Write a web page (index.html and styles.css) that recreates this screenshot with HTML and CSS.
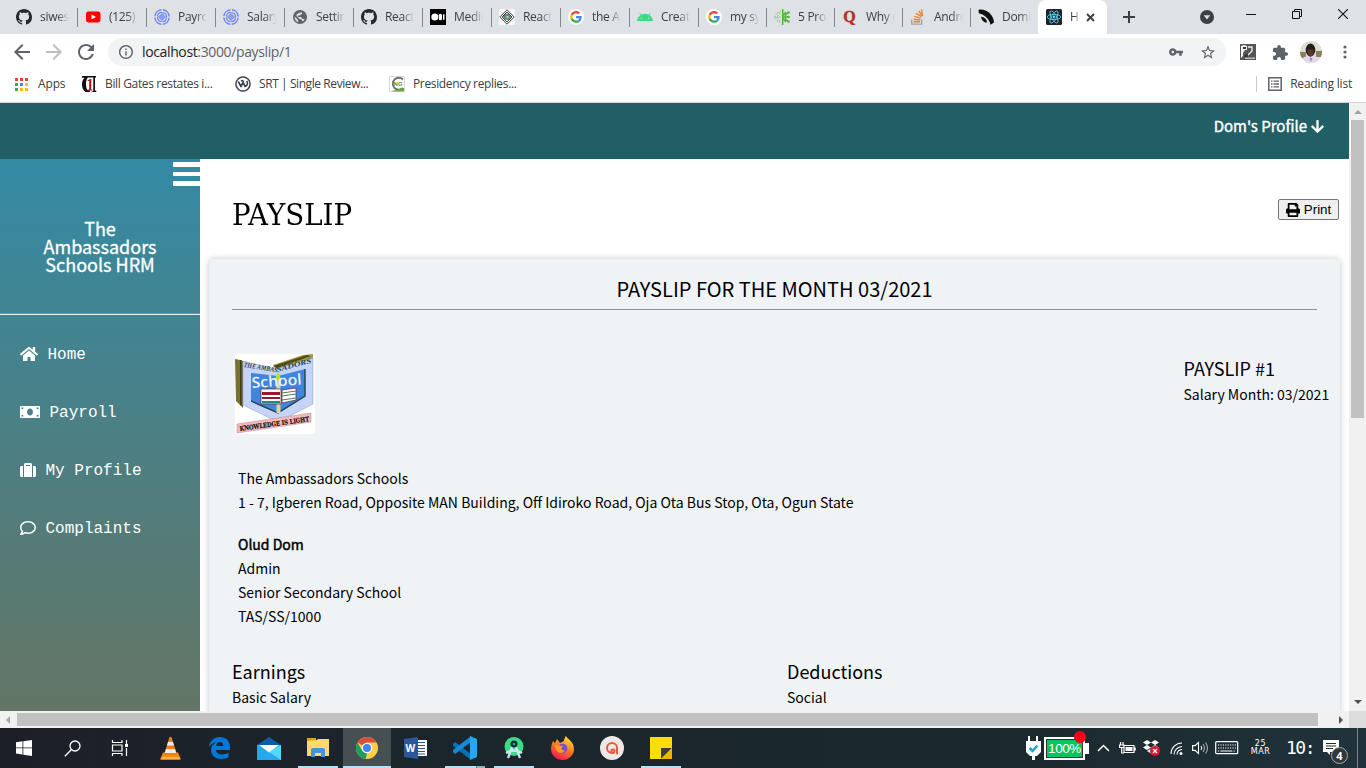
FILE: index.html
```html
<!DOCTYPE html>
<html lang="en">
<head>
<meta charset="utf-8">
<title>HRM - Payslip</title>
<link rel="stylesheet" href="styles.css">
</head>
<body>
<svg class="defs" aria-hidden="true">
  <symbol id="github" viewBox="0 0 16 16"><path fill="#24292e" d="M8 0C3.58 0 0 3.58 0 8c0 3.54 2.29 6.53 5.47 7.59.4.07.55-.17.55-.38 0-.19-.01-.82-.01-1.49-2.01.37-2.53-.49-2.69-.94-.09-.23-.48-.94-.82-1.13-.28-.15-.68-.52-.01-.53.63-.01 1.08.58 1.23.82.72 1.21 1.87.87 2.33.66.07-.52.28-.87.51-1.07-1.78-.2-3.64-.89-3.64-3.95 0-.87.31-1.59.82-2.15-.08-.2-.36-1.02.08-2.12 0 0 .67-.21 2.2.82.64-.18 1.32-.27 2-.27s1.36.09 2 .27c1.53-1.04 2.2-.82 2.2-.82.44 1.1.16 1.92.08 2.12.51.56.82 1.27.82 2.15 0 3.07-1.87 3.75-3.65 3.95.29.25.54.73.54 1.48 0 1.07-.01 1.93-.01 2.2 0 .21.15.46.55.38A8.01 8.01 0 0 0 16 8c0-4.42-3.58-8-8-8z"/></symbol>
  <symbol id="rings" viewBox="0 0 16 16"><g fill="none" stroke="#6f86ee"><circle cx="8" cy="8" r="7.2" stroke-width="1.5" stroke-dasharray="9.8 1.5" stroke-dashoffset="-.8"/><circle cx="8" cy="8" r="4.6" stroke-width="1.3" stroke-dasharray="6 1.2" stroke-dashoffset="-.6"/><circle cx="8" cy="8" r="2.2" stroke-width="1.1"/><path d="M8 3v10M3 8h10" stroke-width=".9"/></g></symbol>
  <symbol id="google" viewBox="0 0 16 16"><circle cx="8" cy="8" r="8" fill="#fff"/><g transform="translate(2.1 2) scale(.247)"><path fill="#EA4335" d="M24 9.5c3.54 0 6.71 1.22 9.21 3.6l6.85-6.85C35.9 2.38 30.47 0 24 0 14.62 0 6.51 5.38 2.56 13.22l7.98 6.19C12.43 13.72 17.74 9.5 24 9.5z"/><path fill="#4285F4" d="M46.98 24.55c0-1.57-.15-3.09-.38-4.55H24v9.02h12.94c-.58 2.96-2.26 5.48-4.78 7.18l7.73 6c4.51-4.18 7.09-10.36 7.09-17.65z"/><path fill="#FBBC05" d="M10.53 28.59c-.48-1.45-.76-2.99-.76-4.59s.27-3.14.76-4.59l-7.98-6.19C.92 16.46 0 20.12 0 24c0 3.88.92 7.54 2.56 10.78l7.97-6.19z"/><path fill="#34A853" d="M24 48c6.48 0 11.93-2.13 15.89-5.81l-7.73-6c-2.15 1.45-4.92 2.3-8.16 2.3-6.26 0-11.57-4.22-13.47-9.91l-7.98 6.19C6.51 42.62 14.62 48 24 48z"/></g></symbol>
</svg>

<div class="browser">
  <div class="tabstrip">
    <div class="tab"><svg class="fav"><use href="#github"/></svg><span class="tab-title">siwes/</span></div>
    <div class="tab"><svg class="fav" viewBox="0 0 16 16"><rect x="1" y="2.5" width="14.5" height="11" rx="2.4" fill="#f00"/><path fill="#fff" d="M6.5 5.5v5L11 8z"/></svg><span class="tab-title">(125) Y</span></div>
    <div class="tab"><svg class="fav"><use href="#rings"/></svg><span class="tab-title">Payroll</span></div>
    <div class="tab"><svg class="fav"><use href="#rings"/></svg><span class="tab-title">Salary</span></div>
    <div class="tab"><svg class="fav" viewBox="0 0 16 16"><circle cx="8" cy="8" r="7" fill="#5f6368"/><path fill="#dee1e6" d="M2.5 7.5l3.2 3 .8 2.8C3.6 12.5 2.5 10 2.5 7.5zM6 8h3l1.5 2h2c-.5 1.5-1 2-1.800 2.500L9.500 10.500 6.500 9.600zM7.500 3.800l2.500-.6v1.600L8 6.300 5.800 6.800 5.600 8.300 4.200 6.800 5 5.300z"/></svg><span class="tab-title">Settings</span></div>
    <div class="tab"><svg class="fav"><use href="#github"/></svg><span class="tab-title">React-</span></div>
    <div class="tab"><svg class="fav" viewBox="0 0 16 16"><path d="M0 0h16v16H0z"/><circle cx="4.800" cy="8" r="3.500" fill="#fff"/><rect x="8.800" y="4.800" width="3.200" height="6.400" rx="1.500" fill="#fff"/><path fill="#fff" d="M13 5.200h1.500v5.600H13z"/></svg><span class="tab-title">Medium</span></div>
    <div class="tab"><svg class="fav" viewBox="0 0 16 16"><path fill="#f7f7f7" d="M0 0h16v16H0z"/><path fill="none" stroke="#444" stroke-width="1" d="M8 .8L15.200 8 8 15.200.8 8zM8 3L13 8 8 13 3 8z"/><path fill="#5a9577" stroke="#333" stroke-width=".5" d="M5 6l2-1 4 .5 1 2-2.500 3-3.500-.5-1.500-2z"/><circle cx="8.500" cy="8" r="1" fill="#ddd"/></svg><span class="tab-title">React t</span></div>
    <div class="tab"><svg class="fav"><use href="#google"/></svg><span class="tab-title">the Am</span></div>
    <div class="tab"><svg class="fav" viewBox="0 0 16 16"><path fill="#3ddc84" d="M0 12a8 8 0 0 1 3.600-6L2.300 3.800l.6-.3L4.200 5.700a8.500 8.500 0 0 1 7.600 0l1.300-2.200.6.3L12.400 6A8 8 0 0 1 16 12z"/><path fill="#dee1e6" d="M3.800 8.700h1.200v1.100H3.800zM11 8.700h1.200v1.100H11z"/></svg><span class="tab-title">Create</span></div>
    <div class="tab tight"><svg class="fav"><use href="#google"/></svg><span class="tab-title">my sys</span></div>
    <div class="tab tight"><svg class="fav" viewBox="0 0 16 16"><g fill="none" stroke="#58b43c"><path stroke-width="1.500" d="M8.700 0v16M9 6.500l3-3.500M9 9.500l3 3.500M9 8h5M12 5.500l2.500-2M12 10.500l2.500 2M11.500 3v10"/><path stroke-width="1.300" stroke-dasharray="1.300 1.300" opacity=".5" d="M7 2L2.500 4.500 1 8l1.500 3.500L7 14M6 4L4 6v4l2 2M0 8h7"/></g><g fill="#58b43c"><circle cx="14.500" cy="3.500" r="1.300"/><circle cx="14.500" cy="8" r="1.300"/><circle cx="14.500" cy="12.500" r="1.300"/></g></svg><span class="tab-title">5 Prob</span></div>
    <div class="tab tight"><svg class="fav" viewBox="0 0 16 16"><text x="1.200" y="13.200" class="quora">Q</text></svg><span class="tab-title">Why d</span></div>
    <div class="tab tight"><svg class="fav" viewBox="0 0 16 16"><path fill="none" stroke="#9fa4a8" stroke-width="1.300" d="M1.700 10.500v4.700h10v-4.700"/><path fill="none" stroke="#f48024" stroke-width="1.400" d="M3.500 12.800h6.700M3.600 10.300l6.600.7M4.300 7.300l6.300 1.900M6 4.300l5.600 3.400M8.800 2l3.800 5.200M11.500.5l1 6"/></svg><span class="tab-title">Andro</span></div>
    <div class="tab tight"><svg class="fav" viewBox="0 0 16 16"><path fill="#111" d="M.5.8C4-.3 8 .8 11.500 4c3 3 4.500 6.500 4.500 9.500l-3.500 2.200C11.500 10.500 7.500 6 .8 4.200zM3 7.800c3 .3 6 2.500 6 5.800-3 0-5.500-2.300-6-5.800z"/></svg><span class="tab-title">Domin</span></div>
    <div class="tab tab-active"><svg class="fav" viewBox="0 0 16 16"><rect width="16" height="16" rx="1.500" fill="#20232a"/><g fill="none" stroke="#61dafb" stroke-width=".8"><ellipse cx="8" cy="8" rx="6.800" ry="2.600"/><ellipse cx="8" cy="8" rx="6.800" ry="2.600" transform="rotate(60 8 8)"/><ellipse cx="8" cy="8" rx="6.800" ry="2.600" transform="rotate(120 8 8)"/></g><circle cx="8" cy="8" r="1.400" fill="#61dafb"/></svg><span class="tab-title">HRM</span><svg class="close" viewBox="0 0 9 9"><path d="M1 1l7 7M8 1L1 8" stroke="#3c4043" stroke-width="2"/></svg></div>
    <svg class="new-tab" viewBox="0 0 12 12"><path d="M6 0v12M0 6h12" stroke="#3c4043" stroke-width="2"/></svg>
    <div class="window-controls">
      <svg width="14" height="14" viewBox="0 0 14 14"><circle cx="7" cy="7" r="7" fill="#3c4043"/><path fill="#dee1e6" d="M3.700 5.200h6.600L7 9.600z"/></svg>
      <svg class="raised min" width="10" height="10" viewBox="0 0 10 10"><path d="M0 5.500h10" stroke="#111"/></svg>
      <svg class="raised max" width="10" height="10" viewBox="0 0 10 10"><path fill="none" stroke="#111" d="M.5 2.500h7v7h-7zM2.500 2.500v-2h7v7h-2"/></svg>
      <svg class="raised shut" width="10" height="10" viewBox="0 0 10 10"><path d="M0 0l10 10M10 0L0 10" stroke="#111" stroke-width="1.100"/></svg>
    </div>
  </div>

  <div class="toolbar">
    <svg class="nav" viewBox="3 3 18 18"><path fill="#5f6368" d="M20 11H7.830l5.590-5.590L12 4l-8 8 8 8 1.410-1.410L7.830 13H20v-2z"/></svg>
    <svg class="nav" viewBox="3 3 18 18"><path fill="#bcbec1" d="M4 11h12.170l-5.590-5.590L12 4l8 8-8 8-1.410-1.410L16.170 13H4v-2z"/></svg>
    <svg class="nav" viewBox="3 3 18 18"><path fill="#5f6368" d="M17.650 6.350C16.200 4.900 14.210 4 12 4c-4.420 0-7.990 3.580-7.990 8s3.570 8 7.990 8c3.730 0 6.840-2.550 7.730-6h-2.080c-.82 2.330-3.040 4-5.650 4-3.310 0-6-2.690-6-6s2.690-6 6-6c1.660 0 3.140.69 4.220 1.780L13 11h7V4l-2.350 2.350z"/></svg>
    <div class="omnibox">
      <svg class="info" viewBox="2 2 20 20"><path fill="#5f6368" d="M11 17h2v-6h-2v6zm1-15C6.480 2 2 6.480 2 12s4.480 10 10 10 10-4.480 10-10S17.520 2 12 2zm0 18c-4.410 0-8-3.590-8-8s3.590-8 8-8 8 3.590 8 8-3.590 8-8 8zM11 9h2V7h-2v2z"/></svg>
      <span class="url"><b>localhost</b>:3000/payslip/1</span>
      <svg class="key" viewBox="1 6 22 12"><path fill="#5f6368" d="M12.650 10C11.830 7.670 9.610 6 7 6c-3.310 0-6 2.690-6 6s2.690 6 6 6c2.610 0 4.830-1.670 5.650-4H17v4h4v-4h2v-4H12.650zM7 14c-1.100 0-2-.9-2-2s.9-2 2-2 2 .9 2 2-.9 2-2 2z"/></svg>
      <svg class="star" viewBox="2 2 20 19"><path fill="#5f6368" d="M22 9.240l-7.190-.62L12 2 9.190 8.630 2 9.240l5.460 4.730L5.820 21 12 17.270 18.180 21l-1.630-7.030L22 9.240zM12 15.400l-3.760 2.270 1-4.280-3.320-2.880 4.380-.38L12 6.100l1.710 4.040 4.380.38-3.320 2.880 1 4.280L12 15.400z"/></svg>
    </div>
    <svg class="ext1" viewBox="0 0 16 16"><path fill="#555" d="M0 0h16v16H0z"/><path fill="#f2f2f2" d="M1 2l3-1 3 1v4H5l-2 3v3l-2 2z"/><path fill="#333" d="M3 3h3v2H3zM5 11l3-2v4H4z"/><path fill="none" stroke="#eee" stroke-width="1.300" d="M8 3h4v4l-4 4"/><path fill="#bbb" d="M5 13.500h10V15H5z"/></svg>
    <svg class="ext2" viewBox="2 1 21 21"><path fill="#5f6368" d="M20.500 11H19V7c0-1.100-.9-2-2-2h-4V3.500C13 2.120 11.880 1 10.500 1S8 2.120 8 3.500V5H4c-1.100 0-1.990.9-1.990 2v3.800H3.500c1.490 0 2.700 1.210 2.700 2.700s-1.210 2.700-2.700 2.700H2V20c0 1.100.9 2 2 2h3.800v-1.500c0-1.490 1.210-2.700 2.700-2.700 1.490 0 2.700 1.210 2.700 2.700V22H17c1.100 0 2-.9 2-2v-4h1.500c1.380 0 2.500-1.120 2.500-2.500S21.880 11 20.500 11z"/></svg>
    <svg class="avatar" viewBox="0 0 22 22"><defs><clipPath id="face"><circle cx="11" cy="11" r="11"/></clipPath></defs><g clip-path="url(#face)"><path fill="#d9ddd2" d="M0 0h22v22H0z"/><path fill="#8a8158" d="M0 11h6v6H0zM16 10h6v6h-6z"/><path fill="#ded9ee" d="M0 22c0-5 4-7 10.500-7S22 17 22 22z"/><ellipse cx="10.500" cy="9" rx="4.800" ry="6.500" fill="#231a18"/><path fill="#5b382c" d="M7.500 8.500h6v5l-3 2.500-3-2.500z"/><path fill="#a886a8" d="M9.500 17h3l-1.500 4z"/></g></svg>
    <svg class="dots" viewBox="0 0 4 14"><g fill="#5f6368"><circle cx="2" cy="2" r="1.600"/><circle cx="2" cy="7" r="1.600"/><circle cx="2" cy="12" r="1.600"/></g></svg>
  </div>

  <div class="bookmarks">
    <svg class="bm apps" viewBox="0 0 13 13"><path fill="#ea4335" d="M0 0h3v3H0zM5 0h3v3H5zM10 0h3v3h-3z"/><path fill="#34a853" d="M0 5h3v3H0zM0 10h3v3H0z"/><path fill="#4285f4" d="M5 5h3v3H5z"/><path fill="#fbbc04" d="M10 5h3v3h-3zM5 10h3v3H5zM10 10h3v3h-3z"/></svg>
    <span class="bm-t t-apps">Apps</span>
    <svg class="bm i16" viewBox="0 0 16 16"><path fill="#111" d="M1 0h14v1.500H7C4.500 3 4.500 12 6.500 14l2.500.5V16H4.500C0 13 0 5 3.500 1.800H1z"/><path fill="#111" d="M12.300 1h1.700v13l1.800 2h-6l2.500-1z"/><path fill="#b11" d="M6.500 4.500l2.500-1.500h1.300v10.500h1v1H6.800v-1h1.400V5H6.500z"/></svg>
    <span class="bm-t t-bill">Bill Gates restates i...</span>
    <svg class="bm i16" viewBox="0 0 16 16"><circle cx="8" cy="8" r="7.100" fill="none" stroke="#3d4450" stroke-width="1.500"/><path fill="none" stroke="#3d4450" stroke-width="1.700" stroke-linejoin="round" d="M3.200 5.500l2.800 5 2-4 2.200 4c2.500-1 2.800-3.500 1.600-5.500M6 5q2-1 2.500 1"/></svg>
    <span class="bm-t t-srt">SRT | Single Review...</span>
    <svg class="bm i16" viewBox="0 0 16 16"><path fill="#fff" stroke="#d8d8d8" d="M.5.5h15v15H.5z"/><path fill="none" stroke="#6e746b" stroke-width="1.800" d="M14 3.500A6 6 0 1 0 14 12"/><path fill="#64aa3a" d="M3 15l12-3v3.500H3z"/><text x="4.600" y="10.200" class="ng">NG</text></svg>
    <span class="bm-t t-pres">Presidency replies...</span>
    <div class="reading"><svg width="14" height="14" viewBox="0 0 14 14"><path fill="none" stroke="#5f6368" stroke-width="1.500" d="M.8.8h12.400v12.400H.8z"/><path stroke="#5f6368" stroke-width="1.300" d="M3 4.200h1.500M5.500 4.200H11M3 7h1.500M5.500 7H11M3 9.800h1.500M5.500 9.800H11"/></svg><span class="bm-t t-read">Reading list</span></div>
  </div>

  <div class="viewport">
    <div class="page">
      <header class="topbar"><span class="profile">Dom's Profile</span><svg class="down" viewBox="0 0 448 512"><path fill="#fff" d="M413.100 222.500l22.200 22.200c9.400 9.400 9.400 24.600 0 33.900L241 473c-9.400 9.400-24.600 9.400-33.900 0L12.700 278.600c-9.400-9.400-9.400-24.600 0-33.900l22.200-22.200c9.500-9.500 25-9.300 34.300.4L184 343.400V56c0-13.300 10.700-24 24-24h32c13.300 0 24 10.700 24 24v287.400l114.800-120.500c9.300-9.800 24.800-10 34.300-.4z"/></svg></header>
      <div class="columns">
        <aside class="sidebar">
          <div class="burger"><i></i><i></i><i></i></div>
          <div class="brand">The<br>Ambassadors<br>Schools HRM</div>
          <nav class="menu">
            <a class="item"><svg width="18" height="16" viewBox="0 0 576 512"><path d="M280.370 148.260L96 300.110V464a16 16 0 0 0 16 16l112.060-.29a16 16 0 0 0 15.920-16V368a16 16 0 0 1 16-16h64a16 16 0 0 1 16 16v95.640a16 16 0 0 0 16 16.050L464 480a16 16 0 0 0 16-16V300L295.670 148.260a12.190 12.190 0 0 0-15.300 0zM571.600 251.470L488 182.560V44.050a12 12 0 0 0-12-12h-56a12 12 0 0 0-12 12v72.610L318.470 43a48 48 0 0 0-61 0L4.340 251.470a12 12 0 0 0-1.600 16.900l25.500 31A12 12 0 0 0 45.150 301l235.220-193.740a12.190 12.190 0 0 1 15.300 0L530.900 301a12 12 0 0 0 16.900-1.600l25.500-31a12 12 0 0 0-1.700-16.930z"/></svg>Home</a>
            <a class="item"><svg width="20" height="16" viewBox="0 0 640 512"><path d="M608 64H32C14.330 64 0 78.330 0 96v320c0 17.670 14.330 32 32 32h576c17.670 0 32-14.330 32-32V96c0-17.670-14.330-32-32-32zM48 400v-64c35.350 0 64 28.650 64 64H48zm0-224v-64h64c0 35.350-28.650 64-64 64zm272 192c-53.020 0-96-50.150-96-112 0-61.860 42.980-112 96-112s96 50.140 96 112c0 61.870-43 112-96 112zm272 32h-64c0-35.350 28.650-64 64-64v64zm0-224c-35.350 0-64-28.650-64-64h64v64z"/></svg>Payroll</a>
            <a class="item"><svg width="16" height="16" viewBox="0 0 512 512"><path d="M128 480h256V80c0-26.500-21.500-48-48-48H176c-26.500 0-48 21.500-48 48v400zm64-384h128v32H192V96zm320 80v256c0 26.500-21.500 48-48 48h-48V128h48c26.500 0 48 21.500 48 48zM96 480H48c-26.500 0-48-21.500-48-48V176c0-26.500 21.500-48 48-48h48v352z"/></svg>My Profile</a>
            <a class="item"><svg width="16" height="16" viewBox="0 0 512 512"><path d="M256 32C114.600 32 0 125.100 0 240c0 47.600 19.900 91.200 52.900 126.300C38 405.700 7 439.100 6.500 439.500c-6.600 7-8.400 17.200-4.600 26S14.400 480 24 480c61.500 0 110-25.700 139.100-46.300C192 442.800 223.200 448 256 448c141.400 0 256-93.100 256-208S397.400 32 256 32zm0 368c-26.700 0-53.100-4.100-78.400-12.100l-22.700-7.200-19.500 13.800c-14.300 10.100-33.900 21.400-57.500 29 7.300-12.100 14.400-25.700 19.900-40.200l10.600-28.100-20.600-21.800C69.700 314.100 48 282.200 48 240c0-88.200 93.300-160 208-160s208 71.800 208 160-93.300 160-208 160z"/></svg>Complaints</a>
          </nav>
        </aside>
        <main class="main">
          <div class="heading"><h1>PAYSLIP</h1><button class="print"><svg width="14" height="14" viewBox="0 0 512 512"><path d="M448 192V77.250c0-8.490-3.370-16.620-9.370-22.630L393.370 9.370c-6-6-14.140-9.370-22.630-9.370H96C78.330 0 64 14.330 64 32v160c-35.350 0-64 28.650-64 64v112c0 8.840 7.160 16 16 16h48v96c0 17.670 14.330 32 32 32h320c17.670 0 32-14.330 32-32v-96h48c8.840 0 16-7.160 16-16V256c0-35.350-28.650-64-64-64zm-64 256H128v-96h256v96zm0-224H128V64h192v48c0 8.840 7.160 16 16 16h48v96z"/></svg>Print</button></div>
          <section class="card">
            <h2>PAYSLIP FOR THE MONTH 03/2021</h2>
            <div class="slip-head">
              <svg class="logo" viewBox="0 0 80 80"><path fill="#fff" d="M0 0h80v80H0z"/><path fill="#77702f" d="M0 5l5 1v45l-4-4zM5 6l3 1v47l-3-3z"/><path fill="#3c3c1c" d="M5 6h1.500v46L5 51z"/><path fill="#a69a3c" d="M38 11L68 1l10-1v7L42 17z"/><path fill="#4d4a20" d="M38 12l34-11 4 1-34 12z"/><path fill="#c7d4fa" stroke="#8795ba" stroke-width=".5" d="M8 7l33 8L78 4v46L43 68 8 51z"/><path fill="#3f86dc" d="M16 19l27 3 27-7v26L43 59 16 47z"/><path fill="none" stroke="#244a55" stroke-width="1.500" d="M70 15v27L43 59 16 47"/><path fill="#ddd59a" d="M41.500 27h4v32h-4z"/><path fill="#b8de3c" d="M43 17l3 8-3 4-3-4z"/><path fill="#fff" stroke="#6d2035" stroke-width=".7" d="M26 35h20v15H26zM47 36l14-2v12l-14 3z"/><path fill="#9b1730" d="M27 38h18v3H27zM27 43h18v2H27z"/><path fill="#248887" d="M27 47h18v2.500H27z"/><path stroke="#517d52" stroke-width="1" d="M47 39l14-2M47 42l14-2M47 46l14-2"/><text class="school" x="17" y="34" transform="rotate(-4 17 34)" textLength="50" lengthAdjust="spacingAndGlyphs">School</text><text class="arch" x="8.500" y="13" transform="rotate(9 8.500 13)" textLength="34" lengthAdjust="spacingAndGlyphs">THE AMBAS</text><text class="arch" x="42" y="18" transform="rotate(-15 42 18)" textLength="36" lengthAdjust="spacingAndGlyphs">SADORS</text><path fill="#f0b8b9" stroke="#ba8b8f" stroke-width=".5" d="M2 70l74-11v9L2 79z"/><text class="motto" x="5" y="77" transform="rotate(-8 5 77)" textLength="70" lengthAdjust="spacingAndGlyphs">KNOWLEDGE IS LIGHT</text></svg>
              <div class="slip-no"><h3>PAYSLIP #1</h3><p>Salary Month: 03/2021</p></div>
            </div>
            <div class="org"><p>The Ambassadors Schools</p><p>1 - 7, Igberen Road, Opposite MAN Building, Off Idiroko Road, Oja Ota Bus Stop, Ota, Ogun State</p></div>
            <div class="person"><p class="name">Olud Dom</p><p>Admin</p><p>Senior Secondary School</p><p>TAS/SS/1000</p></div>
            <div class="split"><div><h3>Earnings</h3><p>Basic Salary</p></div><div><h3>Deductions</h3><p>Social</p></div></div>
          </section>
        </main>
      </div>
    </div>
    <div class="vbar"><i class="arrow up"></i><div class="vthumb"></div><i class="arrow dn"></i></div>
    <div class="hbar"><i class="arrow lf"></i><div class="hthumb"></div><i class="arrow rt"></i></div>
    <div class="corner"></div>
  </div>
</div>

<div class="taskbar">
  <div class="cell"><svg width="16" height="16" viewBox="0 0 16 16"><path fill="#fff" d="M0 2.300L6.500 1.300v6.200H0zM7.300 1.200L16 0v7.500H7.300zM0 8.300h6.500v6.200L0 13.600zM7.300 8.300H16V16l-8.700-1.300z"/></svg></div>
  <div class="cell"><svg width="17" height="17" viewBox="0 0 17 17"><g fill="none" stroke="#fff" stroke-width="1.300"><circle cx="11" cy="6" r="5"/><path d="M7.500 9.500L.8 16.200"/></g></svg></div>
  <div class="cell"><svg width="18" height="16" viewBox="0 0 18 16"><g fill="none" stroke="#fff" stroke-width="1.200"><path d="M1.500 0v2.500h9.500V0M1.500 16v-2.500h9.500V16M1.500 5h9.500v6H1.500zM15.500 0v4M15.500 8v8"/></g><path fill="#fff" d="M14 4h3v3h-3z"/></svg></div>
  <div class="apps-group">
    <div class="cell"><svg width="21" height="23" viewBox="0 0 21 23"><path fill="#f58a0b" d="M3 15.500h15l3 7H0z"/><path fill="#f47c0a" d="M9.500 0h2L17 18H4z"/><path fill="#eee" d="M8 5h5l1 3.500H7zM6 12h9l1.200 4H4.800z"/><path fill="#ffb34c" d="M2 20h17l1 2.500H1z"/></svg></div>
    <div class="cell"><svg width="21" height="22" viewBox="0 0 21 22"><path fill="#0078d7" d="M0 10C1 3 6 0 11 0c6 0 10 4 10 10v3H7c.3 3 3 4.500 6 4.500 2.500 0 4.500-.5 6.500-1.700v4.500C17.500 21.500 15 22 12 22 6 22 2 18 2 13c0-3.500 2.200-6.500 5.500-8C4 5.500 1.500 7.500 0 10zM7.200 9h7c0-2.500-1.300-4-3.500-4S7.500 6.500 7.200 9z"/></svg></div>
    <div class="cell"><svg width="24" height="23" viewBox="0 0 24 23"><path fill="#0d5ca8" d="M0 8L12 0l12 8v6H0z"/><path fill="#28a8ea" d="M0 8h24v15H0z"/><path fill="#50d9f8" d="M24 8v15L12 15z"/><path fill="#f6f8fa" d="M2 8h20l-10 7.500z"/></svg></div>
    <div class="cell open"><svg width="22" height="20" viewBox="0 0 22 20"><path fill="#e0a11d" d="M0 0h9v4H0z"/><path fill="#ffd86e" d="M0 3L10 2l1-1h11v17H0z"/><path fill="#3f96d8" d="M4 11l2-1h10l2 1v8h-4v-4H8v4H4z"/></svg></div>
    <div class="cell open current"><svg width="22" height="22" viewBox="0 0 22 22"><circle cx="11" cy="11" r="11" fill="#ffce44"/><path fill="#dd4b3e" d="M1.470 5.500A11 11 0 0 1 20.530 5.500H11L6 8z"/><path fill="#1a9f5e" d="M1.470 5.500l4.800 8.300L11 16.500 9.500 21.900A11 11 0 0 1 1.470 5.500z"/><circle cx="11" cy="11" r="5.200" fill="#fff"/><circle cx="11" cy="11" r="4.100" fill="#4285f4"/></svg></div>
    <div class="cell"><svg width="23" height="22" viewBox="0 0 23 22"><path fill="#fff" d="M11 3h12v16H11z"/><path stroke="#2b579a" stroke-width="1" d="M13 5.500h8M13 8.500h8M13 11.500h8M13 14.500h8M13 17h8"/><path fill="#2b579a" d="M0 2l14-2v22L0 20z"/><text x="1.500" y="15" class="word">W</text></svg></div>
    <div class="cell open vs"><svg width="24" height="24" viewBox="0 0 24 24"><path fill="#0871b8" d="M0 8l2-2 16 12v6L0 10z"/><path fill="#168ad2" d="M0 16l2 2L18 6V0L0 14z"/><path fill="#2aa5f4" d="M17 0l7 3v18l-7 3z"/></svg></div>
    <div class="cell open"><svg width="20" height="22" viewBox="0 0 20 22"><circle cx="10" cy="9.500" r="9.500" fill="#3ddc84"/><path fill="none" stroke="#cde5f2" stroke-width="2.300" d="M8.500 9L4 21M11.500 9L16 21M2 16q8-5 16 0"/><circle cx="10" cy="7" r="3.500" fill="#073042"/><circle cx="10" cy="7" r="1.100" fill="#3ddc84"/></svg></div>
    <div class="cell"><svg width="23" height="24" viewBox="0 0 23 24"><defs><linearGradient id="ff" x1=".8" y1="0" x2=".3" y2="1"><stop stop-color="#ffe53b"/><stop offset=".5" stop-color="#ff7a1e"/><stop offset="1" stop-color="#f0145a"/></linearGradient></defs><path fill="url(#ff)" d="M2 5l2 2 2-4 3 4 4-2c0-2 1-4 2-5 1 3 8 5 8 13 0 6-5 11-11.500 11S0 19 0 13c0-3 1-5 2-8z"/><circle cx="11.500" cy="12.500" r="4.800" fill="#7551d5"/><path fill="#ff9a24" d="M4 9l8 1-2 3 4 2-3 2c-4 0-7-3-7-8z"/></svg></div>
    <div class="cell"><svg width="24" height="24" viewBox="0 0 24 24"><circle cx="12" cy="12" r="12" fill="#eee8e6"/><path fill="none" stroke="#e5583f" stroke-width="2" stroke-linecap="round" d="M17 17.500V12a5 5 0 1 0-5 5c3 0 3.500-3.500 1-3.500-1.500 0-2 1-1.500 2"/></svg></div>
    <div class="cell open"><svg width="22" height="22" viewBox="0 0 22 22"><path fill="#ffdd00" d="M0 0h22v22H0z"/><path fill="#3c3c3c" d="M11 11h11L11 22z"/><path fill="#f1b500" d="M22 11v11H11z"/></svg></div>
  </div>
  <div class="tray">
    <svg width="18" height="40" viewBox="0 0 18 40"><path fill="#fff" d="M3 8h2v5h6V8h2v5h3v11l-4 4h-2v4H7v-4H5l-4-4V13h2z"/><path fill="none" stroke="#1ba3d6" stroke-width="2.500" d="M4.500 20l3 3 5-5.500"/></svg>
    <div class="battery">100%<i class="dot"></i></div>
    <svg class="chev" width="13" height="8" viewBox="0 0 13 8"><path fill="none" stroke="#fff" stroke-width="1.500" d="M1 7l5.500-5.500L12 7"/></svg>
    <svg class="plug" width="17" height="12" viewBox="0 0 17 12"><path fill="none" stroke="#fff" stroke-width="1.200" d="M5 3.500h10v7H5zM16.200 5.500v3M1.500 0v3M4 0v3M.5 3h4.500v2.500H.5zM2.700 5v6H5"/><path fill="#fff" d="M6.500 5h7v4h-7z"/></svg>
    <svg class="drop" width="18" height="16" viewBox="0 0 18 16"><path fill="#fff" d="M0 2.500L4 0l4 2.500L4 5zM8 2.500L12 0l4 2.500L12 5zM0 7.500L4 5l4 2.500L4 10zM8 7.500L12 5l4 2.500L12 10zM4 11l4-2.500 4 2.500-4 2.500z"/><circle cx="12" cy="11" r="5" fill="#d9162b"/><path stroke="#fff" stroke-width="1.300" d="M10 9l4 4M14 9l-4 4"/></svg>
    <svg class="wifi" width="13" height="13" viewBox="0 0 13 13"><g fill="none" stroke="#fff" stroke-width="1.100"><path d="M1 12A11 11 0 0 1 12 1M4 12.500a8.500 8.500 0 0 1 8-8M7 12.500a5.500 5.500 0 0 1 5-5"/></g><circle cx="11" cy="11.500" r="1.500" fill="#fff"/></svg>
    <svg class="vol" width="17" height="14" viewBox="0 0 17 14"><g fill="none" stroke="#fff" stroke-width="1.100"><path d="M.6 4.600H3L6.500 1.500v11L3 9.400H.6zM9 5q1.500 2 0 4"/><path opacity=".6" d="M11 3q3 4 0 8M13.500 1.500q4 5.500 0 11"/></g></svg>
    <svg class="kbd" width="24" height="14" viewBox="0 0 24 14"><rect x=".7" y=".7" width="22" height="12" rx="1" fill="none" stroke="#fff" stroke-width="1.200"/><path stroke="#fff" stroke-width="1.200" stroke-dasharray="1.200 1.200" d="M3 4h18M3 7h18"/><path stroke="#fff" stroke-width="1.200" stroke-dasharray="1.200 1.200 12 1.200" d="M3 10h18"/></svg>
    <div class="date"><span>25</span><br><span>MAR</span></div>
    <div class="clock">10:</div>
    <div class="notify"><svg width="17" height="15" viewBox="0 0 17 15"><path fill="#fff" d="M0 0h16v12H7v3l-3-3H0z"/><path stroke="#1c2c32" stroke-width="1.200" d="M3 3.500h10M3 6h10M3 8.500h7"/></svg><b class="count">4</b></div>
  </div>
</div>
</body>
</html>
```
FILE: styles.css
```css
* { box-sizing: border-box; }
body { margin: 0; width: 1366px; height: 768px; overflow: hidden; background: #fff; font-family: "Noto Sans CJK SC", sans-serif; color: #000; }
h1, h2, h3, p { margin: 0; font-weight: 400; }
svg { display: block; flex: none; }
.defs { position: absolute; width: 0; height: 0; }
.browser { height: 728px; display: flex; flex-direction: column; }

.tabstrip { height: 34px; flex: none; background: #dee1e6; display: flex; padding-left: 8px; }
.tab { width: 69px; flex: none; height: 34px; display: flex; align-items: center; padding-left: 8px; position: relative; }
.tight { width: 68px; }
.tab::after { content: ""; position: absolute; right: -1px; top: 8px; width: 1px; height: 19px; background: #84888d; }
.tab:nth-child(15)::after, .tab-active::after { display: none; }
.fav { width: 16px; height: 16px; }
.tab-title { margin-left: 8px; width: 29px; overflow: hidden; white-space: nowrap; font: 12px/18px "Open Sans", sans-serif; letter-spacing: -.3px; color: #3c4043; -webkit-mask-image: linear-gradient(90deg, #000 60%, transparent); mask-image: linear-gradient(90deg, #000 60%, transparent); }
.tab-active { background: #fff; border-radius: 8px 8px 0 0; }
.tab-active .tab-title { width: 9px; }
.close { width: 9px; height: 9px; margin-left: 7px; }
.new-tab { width: 12px; height: 12px; margin: 11px 0 0 16px; }
.window-controls { margin-left: auto; margin-right: 18px; display: flex; align-items: center; }
.raised { margin-bottom: 6px; }
.min { margin-left: 32px; }
.max { margin-left: 36px; }
.shut { margin-left: 36px; }
.quora { font: bold 16px "Liberation Serif", serif; fill: #b92b27; stroke: #b92b27; stroke-width: .4px; }

.toolbar { height: 37px; flex: none; display: flex; align-items: center; padding-left: 13px; padding-bottom: 1px; }
.nav { width: 18px; height: 18px; margin-right: 14px; }
.omnibox { width: 1118px; height: 28px; margin-left: -1px; border-radius: 14px; background: #f1f3f4; display: flex; align-items: center; padding-left: 11px; }
.info { width: 14px; height: 14px; }
.url { margin-left: 9px; font: 14px/20px "Open Sans", sans-serif; color: #5f6368; letter-spacing: -.37px; }
.url b { font-weight: 400; color: #202124; }
.key { width: 14px; height: 8px; margin-left: auto; }
.star { width: 14px; height: 14px; margin: 0 11px 0 18px; }
.ext1 { width: 16px; height: 16px; margin-left: 14px; }
.ext2 { width: 15px; height: 15px; margin-left: 17px; }
.avatar { width: 22px; height: 22px; margin-left: 12px; }
.dots { width: 4px; height: 14px; margin-left: 21px; }

.bookmarks { height: 32px; flex: none; border-bottom: 1px solid #d5d8db; display: flex; align-items: center; padding: 0 14px 5px 15px; }
.bm-t { font: 12px/18px "Open Sans", sans-serif; color: #3c4043; white-space: nowrap; margin-left: 8px; letter-spacing: -.35px; }
.apps { width: 13px; height: 13px; }
.i16 { width: 16px; height: 16px; }
.t-apps { margin-left: 10px; width: 43px; letter-spacing: -.15px; }
.t-read { letter-spacing: -.2px; }
.t-bill { width: 130px; }
.t-srt { width: 130px; letter-spacing: -.42px; }
.ng { font: bold 6px "Liberation Sans", sans-serif; fill: #4e9b35; }
.reading { margin-left: auto; height: 16px; border-left: 1px solid #c8cacd; padding-left: 11px; display: flex; align-items: center; }

.viewport { height: 625px; display: grid; grid-template: 608px 17px / 1349px 17px; }
.page { overflow: hidden; display: flex; flex-direction: column; }
.topbar { height: 56px; flex: none; background: #205f65; display: flex; justify-content: flex-end; padding: 11px 25px 0 0; color: #fff; }
.profile { font-size: 15px; line-height: 24px; -webkit-text-stroke: .4px #fff; }
.down { width: 13px; height: 15px; margin: 5px 0 0 4px; }
.columns { display: flex; height: 552px; }
.sidebar { width: 200px; flex: none; color: #fff; background: linear-gradient(#348aa5, #637564); display: flex; flex-direction: column; }
.burger { height: 30px; flex: none; padding: 3px 0 0 173px; display: flex; flex-direction: column; gap: 5px; }
.burger i { height: 4.500px; background: #fff; border-radius: 1px 0 0 1px; }
.brand { height: 126px; flex: none; padding-top: 30px; border-bottom: 1px solid #eee; box-shadow: 0 -1px 0 rgba(150, 150, 150, .8) inset; text-align: center; font-size: 18px; line-height: 18px; -webkit-text-stroke: .3px #fff; }
.menu { padding: 11px 0 0 20px; }
.item { height: 58px; display: flex; align-items: center; gap: 9.500px; font: 16px/20px "Liberation Mono", monospace; }
.item svg { fill: #fff; margin-bottom: 3px; }

.main { flex: 1; padding: 0 9px 0 9px; display: flex; flex-direction: column; }
.heading { height: 100px; flex: none; display: flex; justify-content: space-between; padding: 40px 1px 0 23px; }
h1 { font: 29px/32px "DejaVu Serif", serif; transform-origin: left; transform: scaleX(.955); }
.print { width: 61px; height: 21px; padding: 0; border: 1px solid #767676; border-radius: 2px; background: #efefef; display: flex; align-items: center; justify-content: center; gap: 4px; font: 13.333px "Liberation Sans", sans-serif; color: #000; }
.card { height: 600px; background: #eff3f6; border-radius: 4px; box-shadow: 0 0 7px rgba(0, 0, 0, .22); padding: 14px 23px; }
h2 { height: 37px; font-size: 20px; line-height: 32px; text-align: center; border-bottom: 1px solid #8e9194; }
h3 { font-size: 18px; line-height: 26px; white-space: nowrap; }
p { font-size: 14px; line-height: 24px; white-space: nowrap; }
.slip-head { display: flex; justify-content: space-between; padding: 44px 0 0 3px; height: 156px; margin-right: -13px; }
.slip-no { width: 146.500px; padding-top: 1px; }
.slip-no p { margin-top: 1px; }
.logo { width: 80px; height: 80px; }
.school { font: 600 15px "Open Sans", sans-serif; fill: #eef; }
.arch { font: bold italic 7px "Liberation Serif", serif; fill: #22434a; }
.motto { font: bold 6.500px "DejaVu Serif", serif; fill: #111; stroke: #111; stroke-width: .2px; }
.org, .person { padding-left: 6px; }
.person { margin-top: 18px; }
.name { -webkit-text-stroke: .45px #000; }
.split { display: grid; grid-template-columns: 555px 1fr; margin-top: 30px; }
.split p { margin-top: 1px; }

.vbar { background: #f1f1f1; display: flex; flex-direction: column; align-items: center; padding-top: 7px; }
.vthumb { width: 13px; height: 298px; background: #c1c1c1; margin-top: 6px; }
.hbar { background: #f1f1f1; display: flex; align-items: center; padding-left: 6px; }
.hthumb { width: 1301px; height: 13px; background: #c1c1c1; margin-left: 7px; }
.corner { background: #dcdcdc; }
.arrow { width: 0; height: 0; border: 4px solid transparent; flex: none; }
.up { border-top: 0; border-bottom-color: #a3a3a3; }
.dn { border-bottom: 0; border-top-color: #505050; margin-top: auto; margin-bottom: 7px; }
.lf { border-left: 0; border-right-color: #a3a3a3; }
.rt { border-right: 0; border-left-color: #505050; margin-left: auto; margin-right: 6px; }

.taskbar { height: 40px; background: linear-gradient(90deg, #1d1f28, #1b262b 30%, #1b282d 70%, #20323a); display: flex; }
.cell { width: 48px; height: 40px; display: flex; align-items: center; justify-content: center; position: relative; }
.apps-group { display: flex; gap: 1px; margin-left: 2.500px; }
.open::after { content: ""; position: absolute; left: 4px; right: 4px; bottom: 0; height: 2px; background: #aee3fb; }
.current { background: #465053; }
.current::after { left: 0; right: 0; }
.vs::after { background: linear-gradient(90deg, #aee3fb 31px, #5d7c8a 31px 32px, #8ab4c8 32px); }
.word { font: bold 10px "Open Sans", sans-serif; fill: #fff; }
.tray { margin-left: auto; display: flex; align-items: center; width: 341px; padding-right: 4px; }
.battery { width: 41px; height: 23px; border: 2px solid #fff; background: #08c45f; box-shadow: inset 0 0 0 1px #333; color: #fff; font: 13.500px/20px "Liberation Sans", sans-serif; letter-spacing: -.4px; text-align: center; position: relative; margin-left: 1px; }
.battery::after { content: ""; position: absolute; right: -6px; top: 4px; width: 4px; height: 11px; background: #fff; }
.dot { position: absolute; right: -3px; top: -8px; width: 12px; height: 12px; border-radius: 50%; background: #fb0016; z-index: 1; }
.chev { margin-left: 12px; }
.plug { margin-left: 9px; }
.drop { margin-left: 7px; }
.wifi { margin-left: 9px; }
.vol { margin-left: 9px; }
.kbd { margin-left: 6px; }
.date { margin-left: 10px; width: 23px; text-align: center; color: #fff; font: 8px/8px "DejaVu Sans", sans-serif; letter-spacing: .6px; white-space: nowrap; }
.clock { margin-left: 14px; width: 25px; color: #fff; font: 18px/20px "DejaVu Sans Mono", monospace; letter-spacing: -1.500px; }
.notify { margin-left: 12px; width: 35px; height: 40px; padding-top: 12px; border-right: 1px solid #7d878b; position: relative; }
.count { position: absolute; left: 8px; top: 19px; width: 17px; height: 17px; border: 1px solid #aaa; border-radius: 50%; background: #30383b; color: #fff; font: bold 11px/15px "Open Sans", sans-serif; text-align: center; }
```
